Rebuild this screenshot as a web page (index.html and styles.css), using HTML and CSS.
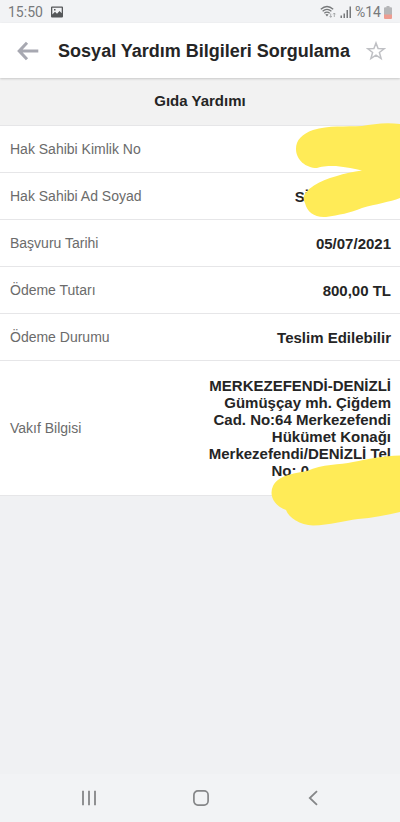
FILE: index.html
```html
<!DOCTYPE html>
<html lang="tr">
<head>
<meta charset="utf-8">
<meta name="viewport" content="width=device-width, initial-scale=1">
<title>Sosyal Yardım Bilgileri Sorgulama</title>
<link rel="stylesheet" href="styles.css">
</head>
<body>
<div class="status">
  <span class="clock">15:50</span>
  <svg class="photo" width="12" height="12" viewBox="0 0 12 12"><path fill="#555759" fill-rule="evenodd" d="M1 .5h10a1 1 0 0 1 1 1v9a1 1 0 0 1-1 1H1a1 1 0 0 1-1-1v-9a1 1 0 0 1 1-1zM1.300 1.800v6.700l2.700-2.800 2 2 2.500-2.600 2.200 2.200V1.800zM3 3h1.500v1.500H3z"/></svg>
  <span class="spacer"></span>
  <svg width="17" height="14" viewBox="0 0 17 14" fill="none" stroke="#77797b" stroke-width="1.300"><path d="M.8 4.200Q7 -1.200 13.200 4.200M2.600 6.300Q7 2.500 11.400 6.300M4.300 8.300Q7 6 9.700 8.300"/><path fill="#77797b" stroke="none" d="M5.300 9.600Q7 8.200 8.500 9.600L7 11.600z"/><path stroke="#9b9c9e" stroke-width=".8" d="M10.700 8.500v3.800M9.500 11l1.200 1.300 1.200-1.300M14.300 12V8M13.100 9.300L14.300 8l1.200 1.300"/></svg>
  <svg width="12" height="12" viewBox="0 0 12 12" fill="#77797b"><path d="M.5 9.500H2V12H.5zM3.500 7.500H5V12H3.500zM6.500 4H8v8H6.500zM9.500.5H11V12H9.500z"/></svg>
  <span class="percent">%14</span>
  <svg width="8" height="13" viewBox="0 0 8 13"><path fill="#b5b6b8" d="M2.500 0h3v1.300H7q1 0 1 1V9H0V2.300q0-1 1-1h1.500z"/><path fill="#ed9c90" d="M0 8.500h8V12q0 1-1 1H1q-1 0-1-1z"/></svg>
</div>
<header class="bar">
  <button class="icon" aria-label="Geri"><svg width="22" height="20" viewBox="0 0 22 20" fill="none" stroke="#a7a8b1" stroke-width="3"><path d="M21.300 10H2.500M10 1.700L2.200 10l7.800 8.300"/></svg></button>
  <h1>Sosyal Yardım Bilgileri Sorgulama</h1>
  <button class="icon" aria-label="Favorilere ekle"><svg width="20" height="20" viewBox="0 0 20 20" fill="none" stroke="#bfc0c4" stroke-width="1.500"><path d="M10 2l2.100 5.600 6 .2-4.700 3.700 1.700 6-5.100-3.400-5.100 3.400 1.700-6L1.900 7.800l6-.2z"/></svg></button>
</header>
<main>
  <h2>Gıda Yardımı</h2>
  <table>
    <tbody>
      <tr><th scope="row">Hak Sahibi Kimlik No</th><td></td></tr>
      <tr><th scope="row">Hak Sahibi Ad Soyad</th><td><span class="masked">Sİ</span></td></tr>
      <tr><th scope="row">Başvuru Tarihi</th><td>05/07/2021</td></tr>
      <tr><th scope="row">Ödeme Tutarı</th><td>800,00 TL</td></tr>
      <tr><th scope="row">Ödeme Durumu</th><td>Teslim Edilebilir</td></tr>
      <tr class="address"><th scope="row">Vakıf Bilgisi</th><td>MERKEZEFENDİ-DENİZLİ<br>Gümüşçay mh. Çiğdem<br>Cad. No:64 Merkezefendi<br>Hükümet Konağı<br>Merkezefendi/DENİZLİ Tel<br><span class="masked">No: 0</span></td></tr>
    </tbody>
  </table>
  <svg class="marker" width="130" height="410" viewBox="270 120 130 410" fill="#ffeb57" aria-hidden="true">
    <path d="M400 124C386 122 373 124 362 126C345 127 329 125 313 130C302 134 296 140 296 149C296 160 306 168 317 168C324 166 328 166 336 166C346 167 355 169 362 170.500C345 173 326 178 314 185.500C309 189 308 190 306.500 192C303 196 303 199 305 203C307 212 315 218 326 217C339 215 350 213 362 208C376 204 390 202 400 198z"/>
    <path d="M400 455.500C383 456 368 459 353 462C340 465 322 464 307 471C292 474 279 475 273 486C269 495 273 505 286 510C289 518 300 525 313 525.500C330 525 344 521 358 519C372 518 387 515 400 512z"/>
  </svg>
</main>
<nav>
  <button aria-label="Son uygulamalar"><svg width="16" height="16" viewBox="0 0 16 16" stroke="#858688" stroke-width="1.800"><path d="M2 .8v14.400M8 .8v14.400M14 .8v14.400"/></svg></button>
  <button aria-label="Ana ekran"><svg width="16" height="16" viewBox="0 0 16 16" fill="none" stroke="#858688" stroke-width="1.700"><rect x=".9" y=".9" width="14.200" height="14.200" rx="4"/></svg></button>
  <button aria-label="Geri"><svg width="16" height="16" viewBox="0 0 16 16" fill="none" stroke="#858688" stroke-width="1.800"><path d="M12 1.200L4.800 8l7.200 6.800"/></svg></button>
</nav>
</body>
</html>
```
FILE: styles.css
```css
* { box-sizing: border-box; }
body {
  margin: 0;
  min-height: 100vh;
  display: flex;
  flex-direction: column;
  background: #f0f1f3;
  font-family: "Liberation Sans", Arial, sans-serif;
  color: #252525;
}
svg { display: block; flex: none; }
h1, h2 { margin: 0; font-weight: bold; }
button { border: 0; padding: 0; background: none; display: flex; justify-content: center; align-items: center; }
.status {
  height: 23px;
  padding: 1px 8px 0;
  display: flex;
  align-items: center;
  gap: 3px;
  background: #f2f3f5;
  color: #77797b;
  font-family: Roboto, sans-serif;
  font-size: 14px;
}
.photo { margin-left: 5px; }
.spacer { flex: 1; }
.bar {
  position: relative;
  z-index: 1;
  height: 55px;
  padding: 0 12px;
  display: flex;
  align-items: center;
  justify-content: space-between;
  background: #fff;
  box-shadow: 0 1px 2px #c8c8c8;
}
.icon { width: 32px; height: 40px; }
.icon:last-child { width: 24px; }
h1 { flex: 1; font-size: 18px; line-height: 24px; text-align: center; white-space: nowrap; }
main { position: relative; flex: 1; }
h2 {
  height: 48px;
  font-size: 15px;
  line-height: 46px;
  text-align: center;
  background: #f2f2f2;
  border-bottom: 1px solid #e6e6e8;
}
table { width: 100%; border-collapse: separate; border-spacing: 0; background: #fff; }
tr { height: 47px; }
th, td { padding: 0; border-bottom: 1px solid #e6e6e8; line-height: 17px; }
th { padding-left: 10px; text-align: left; font-weight: normal; font-size: 14px; color: #6b6b6b; }
td { padding-right: 9px; text-align: right; font-weight: bold; font-size: 15px; }
.address { height: 135px; }
.masked { padding-right: 82px; }
.marker { position: absolute; top: 42px; right: 0; }
nav {
  height: 48px;
  padding: 0 31px 0 33px;
  display: flex;
  background: #f2f3f5;
}
nav button { flex: 1; }
```
